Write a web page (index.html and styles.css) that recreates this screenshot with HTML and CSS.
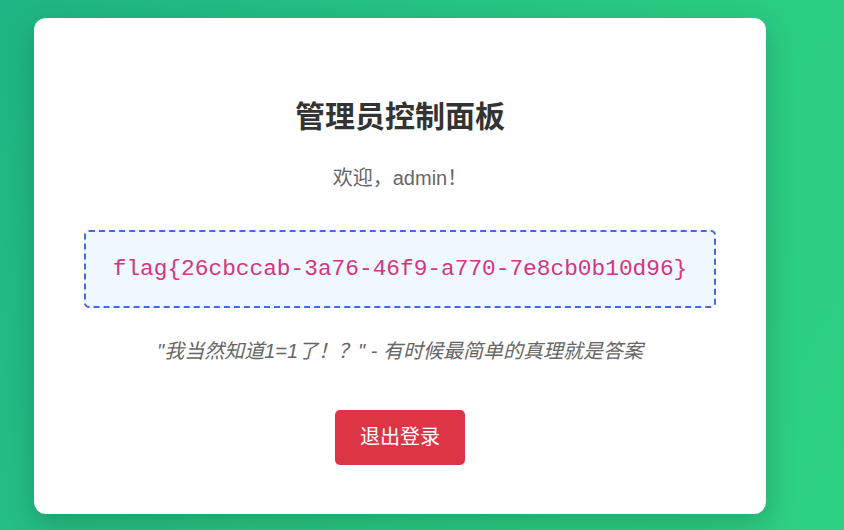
FILE: index.html
```html
<!DOCTYPE html>
<html lang="zh-CN">
<head>
    <meta charset="UTF-8">
    <meta name="viewport" content="width=device-width, initial-scale=1.0">
    <title>管理员控制面板</title>
    <link rel="stylesheet" href="styles.css">
</head>
<body>
    <div class="page">
        <div class="container">
            <h1>管理员控制面板</h1>
            <p class="welcome">欢迎，admin！</p>

            <div class="flag-box">
                <span class="flag">flag{26cbccab-3a76-46f9-a770-7e8cb0b10d96}</span>
            </div>

            <p class="quote">"我当然知道1=1了！？" - 有时候最简单的真理就是答案</p>

            <button class="btn-logout">退出登录</button>
        </div>
    </div>
</body>
</html>
```

FILE: styles.css
```css
html, body {
    margin: 0;
    height: 100%;
}

body {
    font-family: "Liberation Sans", "Noto Sans CJK SC", sans-serif;
    background: linear-gradient(120deg, #1fb584 0%, #2acb83 60%, #2ed083 100%);
    overflow: hidden;
}

.page {
    padding: 18px 0 0 34px;
}

.container {
    box-sizing: border-box;
    width: 732px;
    background-color: #ffffff;
    border-radius: 12px;
    padding: 50px 50px 49px;
    text-align: center;
    box-shadow: 0 10px 30px rgba(0, 0, 0, 0.2);
}

h1 {
    margin: 29px 0 0;
    font-size: 30px;
    line-height: 40px;
    font-weight: bold;
    color: #333333;
}

.welcome {
    margin: 28px 0 0;
    font-size: 20px;
    line-height: 26px;
    color: #666666;
}

.flag-box {
    margin-top: 39px;
    padding: 24px 10px;
    background-color: #f0f8ff;
    border: 2px dashed #4169e1;
    border-radius: 5px;
}

.flag {
    display: block;
    font-family: "Liberation Mono", "Courier New", monospace;
    font-size: 22.8px;
    line-height: 26px;
    color: #d63384;
}

.quote {
    margin: 30px 0 0;
    font-size: 20px;
    line-height: 26px;
    font-style: italic;
    color: #666666;
}

.btn-logout {
    margin-top: 46px;
    padding: 15px 25px;
    font-family: "Liberation Sans", "Noto Sans CJK SC", sans-serif;
    font-size: 20px;
    line-height: 25px;
    color: #ffffff;
    background-color: #dc3545;
    border: none;
    border-radius: 5px;
    cursor: pointer;
}

.btn-logout:hover {
    background-color: #c82333;
}
```
